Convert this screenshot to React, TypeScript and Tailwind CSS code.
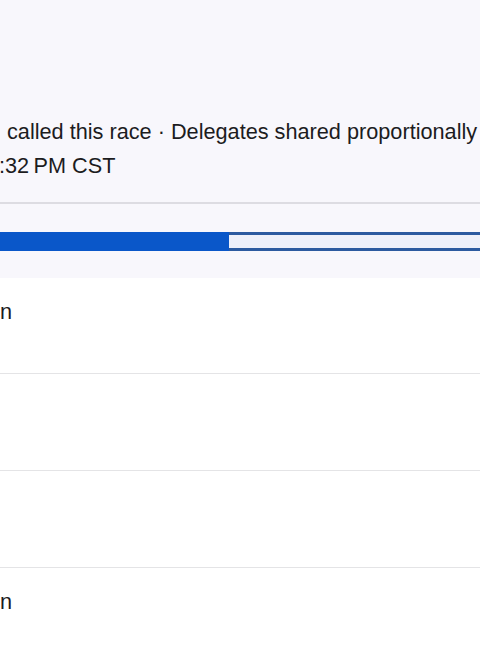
const rows = ['n', '', '', 'n'];

export default function App() {
  return (
    <div className="w-[480px] h-[650px] overflow-hidden bg-white text-[#1c1c1e] font-['Liberation_Sans',Arial,sans-serif]">
      {/* Race summary */}
      <div className="bg-[#f8f7fc] pt-[115px] pb-[27px]">
        <div className="text-[21.7px] leading-[34px] whitespace-nowrap overflow-hidden">
          <div className="pl-[7px]">called this race · Delegates shared proportionally</div>
          <div className="-ml-[1px]">:32{'\u202F'}PM CST</div>
        </div>
        <div className="mt-[19px] h-[2px] bg-[#dddce2]" />
        <div className="mt-[28px] flex h-[19px]">
          <div className="w-[229px] bg-[#0a57c9]" />
          <div className="flex-1 border-y-[3px] border-[#2c5aa0] bg-[#eef0fa]" />
        </div>
      </div>

      {/* Candidate rows */}
      <div>
        {rows.map((name, i) => (
          <div
            key={i}
            className={
              i === 0
                ? 'h-[95px] pt-[17px]'
                : 'h-[97px] pt-[17px] border-t border-[#e4e4e6]'
            }
          >
            <div className="text-[21.7px] leading-[34px] whitespace-nowrap">{name}</div>
          </div>
        ))}
      </div>
    </div>
  );
}
